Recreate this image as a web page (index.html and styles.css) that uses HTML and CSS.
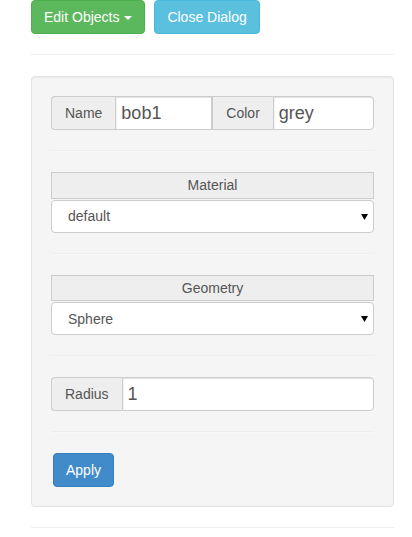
FILE: index.html
```html
<!DOCTYPE html>
<html>
<head>
<meta charset="utf-8">
<link rel="stylesheet" href="styles.css">
</head>
<body>
<div class="page">
  <div class="toolbar">
    <button class="btn btn-success">Edit Objects <span class="caret"></span></button>
    <button class="btn btn-info">Close Dialog</button>
  </div>
  <hr class="rule">
  <div class="well">
    <div class="input-group">
      <span class="addon">Name</span>
      <input class="field field-name" type="text" value="bob1">
      <span class="addon addon-mid">Color</span>
      <input class="field field-grow" type="text" value="grey">
    </div>
    <hr class="rule">
    <div class="select-block">
      <div class="select-header">Material</div>
      <div class="select-box"><span>default</span><svg class="arrow" width="7" height="6" viewBox="0 0 7 6"><polygon points="0,0 7,0 3.5,6" fill="#000"/></svg></div>
    </div>
    <hr class="rule">
    <div class="select-block">
      <div class="select-header">Geometry</div>
      <div class="select-box"><span>Sphere</span><svg class="arrow" width="7" height="6" viewBox="0 0 7 6"><polygon points="0,0 7,0 3.5,6" fill="#000"/></svg></div>
    </div>
    <hr class="rule">
    <div class="input-group">
      <span class="addon">Radius</span>
      <input class="field field-grow" type="text" value="1">
    </div>
    <hr class="rule">
    <button class="btn btn-primary btn-apply">Apply</button>
  </div>
  <hr class="rule">
</div>
</body>
</html>
```

FILE: styles.css
```css
* { box-sizing: border-box; }
html, body { margin: 0; padding: 0; background: #fff; }
body {
  font-family: "Liberation Sans", Arial, sans-serif;
  font-size: 14px;
  line-height: 20px;
  color: #333;
}
.page {
  width: 394px;
  padding-left: 31px;
}
.toolbar {
  display: flex;
  gap: 9px;
}
.btn {
  font-family: "Liberation Sans", Arial, sans-serif;
  font-size: 14px;
  line-height: 20px;
  padding: 6px 12px;
  height: 34px;
  border: 1px solid transparent;
  border-radius: 4px;
  color: #fff;
  cursor: pointer;
}
.btn-success { background: #5cb85c; border-color: #4cae4c; }
.btn-info { background: #5bc0de; border-color: #46b8da; }
.btn-primary { background: #428bca; border-color: #357ebd; }
.btn-apply { margin-left: 2px; display: block; }
.caret {
  display: inline-block;
  width: 0;
  height: 0;
  margin-left: 1px;
  vertical-align: middle;
  border-top: 4px solid #fff;
  border-left: 4px solid transparent;
  border-right: 4px solid transparent;
}
.rule {
  margin: 20px 0;
  border: 0;
  border-top: 1px solid #eee;
  border-bottom: 1px solid #fff;
  height: 0;
  box-sizing: content-box;
}
.well .rule { border-bottom-color: #f8f8f8; }
.well {
  background: #f5f5f5;
  border: 1px solid #e3e3e3;
  border-radius: 4px;
  padding: 19px;
  box-shadow: inset 0 1px 1px rgba(0,0,0,.05);
}
.input-group {
  display: flex;
  height: 34px;
}
.addon {
  padding: 6px 13px;
  font-size: 14px;
  line-height: 20px;
  color: #555;
  background: #eee;
  border: 1px solid #ccc;
  border-radius: 4px 0 0 4px;
  border-right: 0;
  white-space: nowrap;
}
.addon-mid {
  border-radius: 0;
}
.field {
  height: 34px;
  padding: 4px 5px;
  font-family: "Liberation Sans", Arial, sans-serif;
  font-size: 18px;
  color: #555;
  background: #fff;
  border: 1px solid #ccc;
  box-shadow: inset 0 1px 1px rgba(0,0,0,.075), inset 1px 1px 1px rgba(0,0,0,.05);
  border-radius: 0;
  outline: none;
  min-width: 0;
}
.field-name { width: 97px; }
.field-grow { flex: 1; border-radius: 0 4px 4px 0; }
.select-block {
  display: flex;
  flex-direction: column;
}
.select-header {
  height: 26.5px;
  padding: 2px 0;
  text-align: center;
  color: #555;
  background: #eee;
  border: 1px solid #ccc;
  margin-bottom: 1px;
}
.select-box {
  display: flex;
  align-items: center;
  justify-content: space-between;
  height: 33px;
  padding: 0 5px 0 16px;
  color: #555;
  background: #fff;
  border: 1px solid #ccc;
  border-radius: 4px;
}
.arrow { display: block; margin-top: 1px; }
```
